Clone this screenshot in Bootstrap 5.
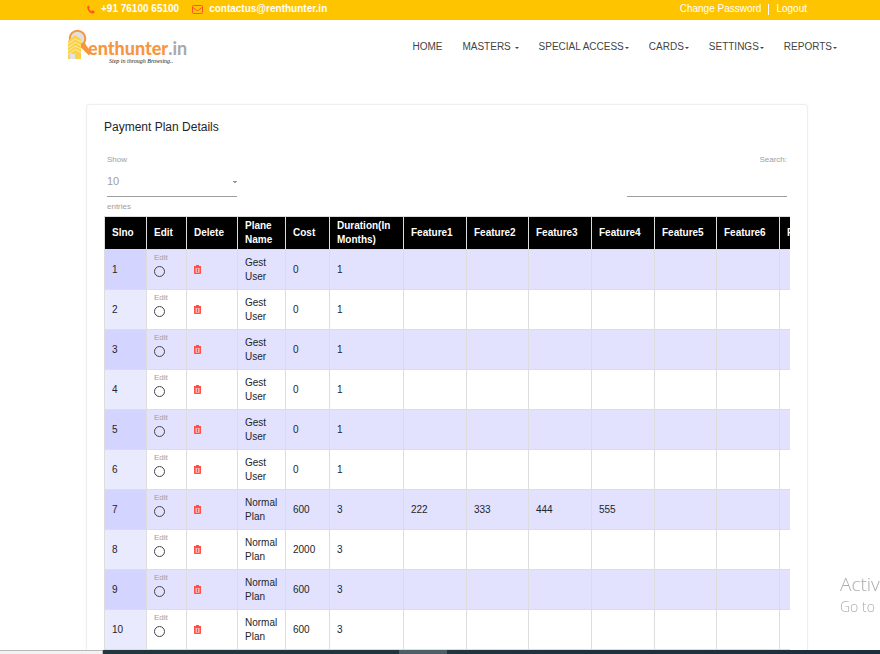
<!DOCTYPE html>
<html lang="en">
<head>
<meta charset="utf-8">
<meta name="viewport" content="width=device-width, initial-scale=1">
<title>Payment Plan Details</title>
<link href="https://cdn.jsdelivr.net/npm/bootstrap@5.3.0/dist/css/bootstrap.min.css" rel="stylesheet">
<style>
  body { font-family: "Liberation Sans", Arial, sans-serif; font-size: 10px; line-height: 14px; color: #212529; background: #fff; }
  .page-pad { padding-left: 87px; padding-right: 73px; }
  .topbar { background: #ffc400; padding-bottom: 2px; line-height: 18px; }
  .topbar a { color: #fff; text-decoration: none; }
  .contact { gap: 13px; font-weight: 700; }
  .contact a { gap: 6px; }
  .account { gap: 7px; }
  .account .vr { height: 11px; align-self: center; background: #fff; opacity: 1; }
  .site-header { padding: 9px 43px 39px 66px; }
  .main-menu { gap: 20px; padding-top: 11px; }
  .main-menu .nav-link { padding: 0; color: #444; }
  .main-menu .dropdown-toggle::after { border-width: 2px 2px 0; margin-left: 1px; vertical-align: 1px; }
  .plan-card { border: 0; border-radius: 2px; box-shadow: 0 0 2px rgba(0,0,0,.25); margin-left: 87px; margin-right: 73px; padding: 14px 17px 0; }
  .plan-title { font-size: 12px; line-height: 16px; font-weight: 400; margin: 0 0 18px; }
  .table-tools { padding: 0 3px 2px; font-size: 8px; color: #9e9e9e; }
  .table-tools .form-select, .table-tools .form-control { border: 0; border-bottom: 1px solid #9e9e9e; border-radius: 0; height: 30px; padding: 0; font-size: 11px; color: #9e9e9e; background-color: transparent; }
  .table-tools .form-select { width: 130px; margin-bottom: 3px; background-image: linear-gradient(#999,#999), linear-gradient(#999,#999); background-size: 4px 1px, 2px 1px; background-position: right 0 top 14px, right 1px top 15px; }
  .table-tools .form-control { width: 160px; }
  .table-window { overflow: hidden; }
  .plans { width: 780px; table-layout: fixed; margin: 0; color: #212529; border-color: #ddd; }
  .plans > :not(caption) > * > * { padding: 0 7px; border-color: #ddd; color: inherit; vertical-align: middle; }
  .plans > thead > tr > th { background: #000; color: #fff; height: 33px; }
  .plans > tbody > tr > td { height: 40px; box-shadow: none; }
  .plans > tbody > tr:nth-child(odd) > td { background: #e2e2ff; }
  .plans > tbody > tr:nth-child(odd) > td:first-child { background: #d3d4ff; }
  .plans > tbody > tr:nth-child(even) > td:first-child { background: #eaeaff; }
  .plans > tbody > tr > .pick-cell { vertical-align: top; padding-top: 2px; }
  .pick-cell label { display: block; font-size: 8px; line-height: 11px; margin-bottom: 3px; color: #9e9e9e; }
  .pick-cell input { appearance: none; display: block; width: 11px; height: 11px; margin: 0; border: 1px solid #444; border-radius: 50%; background: transparent; }
  .pick-cell input:checked { background: #444; }
  .trash { display: block; border: 0; padding: 0; background: none; color: #ff5145; }
  .trash svg { display: block; }
  .c-no { width: 42px; } .c-edit { width: 40px; } .c-del { width: 51px; } .c-name { width: 48px; }
  .c-cost { width: 44px; } .c-dur { width: 74px; } .c-a { width: 63px; } .c-b { width: 62px; }
  .os-note { position: fixed; right: 0; bottom: 37px; width: 40px; overflow: hidden; white-space: nowrap; color: #acacac; font-family: "Open Sans", "Noto Sans", sans-serif; font-weight: 300; font-size: 14px; line-height: 20px; }
  .os-note strong { display: block; font-size: 19px; line-height: 26px; font-weight: 300; }
  .os-bar { height: 4px; background: linear-gradient(90deg, #20393f, #1c2f3f); }
  .os-search { width: 103px; background: #f2f2f2; border-top: 1px solid #b9b9b9; border-right: 1px solid #b9b9b9; }
  .os-active { width: 48px; margin-left: 296px; background: #4d6067; }
</style>
</head>
<body>
<div class="d-flex flex-column vh-100 overflow-hidden">
  <div class="topbar page-pad d-flex justify-content-between">
    <div class="contact d-flex">
      <a class="d-flex align-items-center" href="tel:+917610065100">
        <svg width="8" height="9" viewBox="0 0 8 9" aria-hidden="true"><path fill="#ff5722" d="M1.7.4 2.9 2.7 2 3.6c.5 1.2 1.2 2 2.4 2.6l1-.9 2.3 1.2c.2 1-.6 1.9-1.6 2C3.2 8.6.2 5.5.2 2.2.3 1.2.8.4 1.7.4Z"/></svg>
        +91 76100 65100
      </a>
      <a class="d-flex align-items-center" href="mailto:contactus@renthunter.in">
        <svg width="11" height="9" viewBox="0 0 11 9" aria-hidden="true" fill="none" stroke="#ff5722"><rect x=".5" y=".5" width="10" height="8" rx="1"/><path d="m.7 2.2 3.8 3q1 .8 2 0l3.8-3"/></svg>
        contactus@renthunter.in
      </a>
    </div>
    <div class="account d-flex">
      <a href="#">Change Password</a><span class="vr"></span><a href="#">Logout</a>
    </div>
  </div>

  <header class="site-header d-flex justify-content-between align-items-start">
    <a href="#" aria-label="Renthunter.in">
      <svg class="d-block" width="124" height="37" viewBox="0 0 124 37">
        <circle cx="11.5" cy="9.5" r="7.8" fill="#dfe0e2" stroke="#f7963f" stroke-width="2"/>
        <path d="M13 16.5 15.500 14l3-.5 6.500 10-2 3Z" fill="#f7963f"/>
        <path d="M2 12 9 6l6 4v20H2Z" fill="#fbd04a"/>
        <path d="m2 15 7-5 6 3M2 18.500l7-5 6 3M2 22l7-5 6 3M2 25.500l7-5 6 3" fill="none" stroke="#fff3b0" stroke-width=".8"/>
        <path d="M4 25h5v5H4Z" fill="#e3e3e3"/>
        <text x="22" y="26" font-family="Lato, sans-serif" font-weight="900" font-size="18" fill="#f7963f">enthunter<tspan font-weight="700" fill="#a7a9ac">.in</tspan></text>
        <text x="43" y="34" font-family="Liberation Serif, serif" font-style="italic" font-size="6" fill="#222">Step in through Browsing..</text>
      </svg>
    </a>
    <nav aria-label="Main">
      <ul class="main-menu nav flex-nowrap text-nowrap">
        <li><a class="nav-link" href="#">HOME</a></li>
        <li><a class="nav-link dropdown-toggle" href="#">MASTERS </a></li>
        <li><a class="nav-link dropdown-toggle" href="#">SPECIAL ACCESS</a></li>
        <li><a class="nav-link dropdown-toggle" href="#">CARDS</a></li>
        <li><a class="nav-link dropdown-toggle" href="#">SETTINGS</a></li>
        <li><a class="nav-link dropdown-toggle" href="#">REPORTS</a></li>
      </ul>
    </nav>
  </header>

  <main class="plan-card card flex-grow-1">
    <h1 class="plan-title">Payment Plan Details</h1>
    <div class="table-tools d-flex justify-content-between align-items-start">
      <div>
        <label class="d-block" for="size">Show</label>
        <select class="form-select" id="size"><option>10</option><option>25</option><option>50</option></select>
        <div>entries</div>
      </div>
      <div>
        <label class="d-block text-end" for="search">Search:</label>
        <input class="form-control" id="search" type="search">
      </div>
    </div>
    <div class="table-window">
      <table class="plans table table-bordered">
        <colgroup>
          <col class="c-no"><col class="c-edit"><col class="c-del"><col class="c-name"><col class="c-cost"><col class="c-dur">
          <col class="c-a"><col class="c-b"><col class="c-a"><col class="c-a"><col class="c-b"><col class="c-a"><col>
        </colgroup>
        <thead>
          <tr><th>Slno</th><th>Edit</th><th>Delete</th><th>Plane Name</th><th>Cost</th><th>Duration(In Months)</th><th>Feature1</th><th>Feature2</th><th>Feature3</th><th>Feature4</th><th>Feature5</th><th>Feature6</th><th>Feature7</th></tr>
        </thead>
        <tbody id="plans"></tbody>
      </table>
    </div>
  </main>
</div>

<div class="os-note"><strong>Activ</strong>Go to</div>
<div class="os-bar fixed-bottom d-flex"><div class="os-search"></div><div class="os-active"></div></div>

<script>
  const guest = ["Gest User", 0, 1];
  const plans = [
    guest, guest, guest, guest, guest, guest,
    ["Normal Plan", 600, 3, 222, 333, 444, 555],
    ["Normal Plan", 2000, 3],
    ["Normal Plan", 600, 3],
    ["Normal Plan", 600, 3]
  ];
  const trash = '<svg width="7" height="9" viewBox="0 0 7 9" aria-hidden="true"><path d="M1 3h5v5H1Z" fill="#ffb9b9"/><path fill="currentColor" fill-rule="evenodd" d="M2 0h3v1h2v7.200q0 .8-.8.8H.8Q0 9 0 8.200V1h2ZM1.500 3v4.700h4V3Z"/><path d="M3.500 3.500v3.700" stroke="currentColor" stroke-width="1.200"/></svg>';
  document.getElementById("plans").innerHTML = plans.map((plan, i) => {
    const n = i + 1;
    const values = Array.from({ length: 10 }, (_, k) => `<td>${plan[k] ?? ""}</td>`).join("");
    return `<tr><td>${n}</td>
      <td class="pick-cell"><label for="edit${n}">Edit</label><input type="radio" name="edit" id="edit${n}"></td>
      <td><button type="button" class="trash" aria-label="Delete plan ${n}">${trash}</button></td>${values}</tr>`;
  }).join("");
</script>
<script src="https://cdn.jsdelivr.net/npm/bootstrap@5.3.0/dist/js/bootstrap.bundle.min.js"></script>
</body>
</html>
